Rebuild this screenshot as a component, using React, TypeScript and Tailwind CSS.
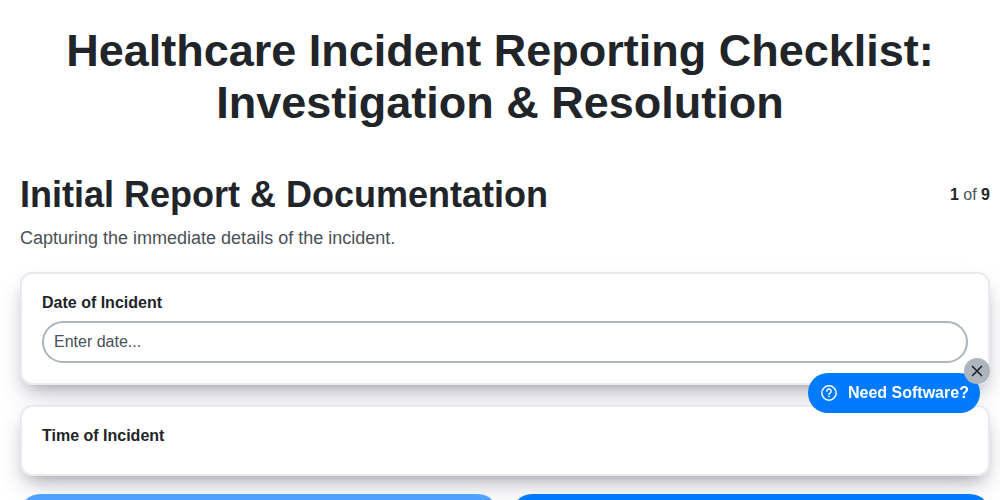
const font = { fontFamily: '"Liberation Sans", Arial, sans-serif' };

function FieldCard({ label, children }: { label: string; children?: React.ReactNode }) {
  return (
    <div className="rounded-xl border-2 border-[#e9e9f0] bg-white px-5 py-5 shadow-[0_13px_27px_-5px_rgba(50,50,93,0.25),0_8px_16px_-8px_rgba(0,0,0,0.3)]">
      <label className="mb-[9px] block text-base leading-[18px] font-bold text-[#212529]">{label}</label>
      {children}
    </div>
  );
}

function NeedSoftware() {
  return (
    <div className="fixed top-[373px] left-[808px]">
      <button className="flex h-10 w-[172px] items-center gap-2 rounded-full bg-[#007bff] pl-[13px] text-base font-bold text-white">
        <svg width="16" height="16" viewBox="0 0 16 16" fill="none" stroke="white" strokeWidth="1.4" className="mr-[3px]">
          <circle cx="8" cy="8" r="7.2" />
          <path d="M5.8 6.2a2.2 2.2 0 1 1 3.3 1.9c-.7.4-1.1.8-1.1 1.5" strokeLinecap="round" />
          <circle cx="8" cy="11.6" r="0.5" fill="white" strokeWidth="0.6" />
        </svg>
        Need Software?
      </button>
      <div className="absolute top-[-15px] left-[156px] flex h-[26px] w-[26px] items-center justify-center rounded-full bg-[#adb5bd]">
        <svg width="12" height="12" viewBox="0 0 12 12" stroke="#212529" strokeWidth="1.7" strokeLinecap="round">
          <path d="M1.5 1.5l9 9M10.5 1.5l-9 9" />
        </svg>
      </div>
    </div>
  );
}

export default function App() {
  return (
    <div className="h-[500px] overflow-hidden bg-white text-[#212529]" style={font}>
      <h1 className="px-5 pt-[25px] pb-[44px] text-center text-[45px] leading-[52px] font-bold">
        Healthcare Incident Reporting Checklist:
        <br />
        Investigation &amp; Resolution
      </h1>
      <div className="pr-[10px] pl-5">
        <div className="flex items-start justify-between">
          <h2 className="text-4xl leading-[44px] font-bold">Initial Report &amp; Documentation</h2>
          <div className="pt-[11px] text-base leading-[22px] text-[#495057]">
            <b className="text-[#212529]">1</b> of <b className="text-[#212529]">9</b>
          </div>
        </div>
        <p className="mt-[10px] mb-[22.5px] text-lg leading-[22px] text-[#495057]">
          Capturing the immediate details of the incident.
        </p>
        <div className="flex flex-col gap-5">
          <FieldCard label="Date of Incident">
            <input
              placeholder="Enter date..."
              className="h-[42px] w-full rounded-full border-2 border-[#adb5bd] px-[10px] text-base text-[#495057] outline-none placeholder:text-[#495057]"
            />
          </FieldCard>
          <FieldCard label="Time of Incident" />
        </div>
        <div className="mt-[18.5px] grid grid-cols-2 gap-[14px]">
          <div className="h-10 rounded-full bg-[#4da3ff]" />
          <div className="h-10 rounded-full bg-[#007bff]" />
        </div>
      </div>
      <NeedSoftware />
    </div>
  );
}
